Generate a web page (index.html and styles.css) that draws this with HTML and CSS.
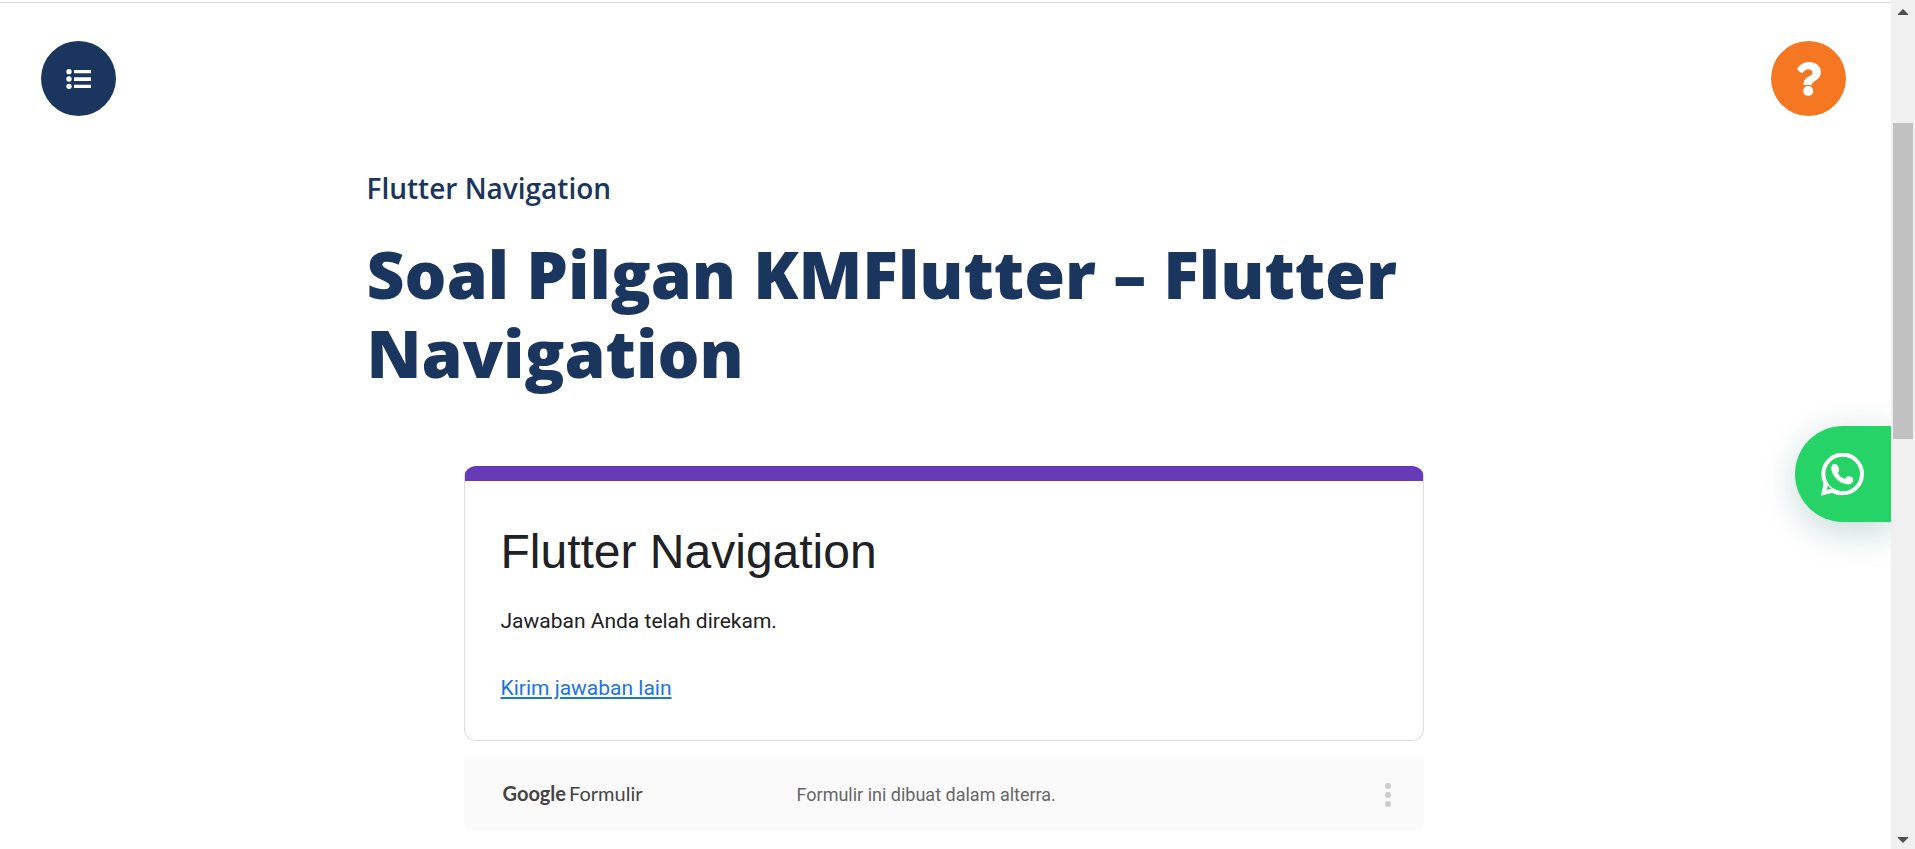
FILE: index.html
```html
<!DOCTYPE html>
<html lang="id">
<head>
<meta charset="utf-8">
<title>Soal Pilgan KMFlutter – Flutter Navigation</title>
<link rel="stylesheet" href="styles.css">
</head>
<body>
<div class="page">
  <header class="toolbar">
    <button class="round round-menu" type="button" aria-label="Daftar isi">
      <svg class="icon-list" viewBox="0 0 75 60" aria-hidden="true">
        <circle cx="9" cy="8" r="8"/><circle cx="9" cy="30" r="8"/><circle cx="9" cy="52" r="8"/>
        <path d="M24 3h51v10H24zM24 25h51v11H24zM24 47h51v10H24z"/>
      </svg>
    </button>
    <button class="round round-help" type="button" aria-label="Bantuan">
      <svg class="icon-help" viewBox="0 0 71 102" aria-hidden="true">
        <path d="M0 20C9 7 20 0 35 0c19 0 36 11 36 30 0 17-12 24-21 29-5 3-5 5-5 8q0 2-2 2H21q-2 0-2-2c0-13 8-19 17-24 7-4 10-6 10-11 0-6-6-10-13-10-7 0-11 4-16 10q-2 2-4 1L1 24q-2-2-1-4z"/>
        <circle cx="33" cy="87" r="15"/>
      </svg>
    </button>
  </header>

  <main class="lesson">
    <p class="topic">Flutter Navigation</p>
    <h1 class="title">Soal Pilgan KMFlutter – Flutter Navigation</h1>

    <section class="form">
      <div class="card">
        <h2 class="card-title">Flutter Navigation</h2>
        <p class="card-text">Jawaban Anda telah direkam.</p>
        <a class="card-link" href="#">Kirim jawaban lain</a>
      </div>
      <footer class="form-footer">
        <span class="brand"><span class="brand-name">Google</span><span>Formulir</span></span>
        <span class="origin">Formulir ini dibuat dalam alterra.</span>
        <button class="more" type="button" aria-label="Opsi lainnya">
          <svg viewBox="0 0 6 24" aria-hidden="true"><circle cx="3" cy="3" r="3"/><circle cx="3" cy="12" r="3"/><circle cx="3" cy="21" r="3"/></svg>
        </button>
      </footer>
    </section>
  </main>

  <a class="chat" href="#" aria-label="WhatsApp">
    <svg viewBox="260 158 129 129" aria-hidden="true">
      <circle class="chat-ring" cx="325" cy="221" r="58"/>
      <path class="chat-hole" d="M272 240l14 22 20 10-10 2-20 0-4-8z"/>
      <path d="M268 249l-8 37 35-9c7 4 13 6 20 7l2-12c-8-1-14-4-20-8l-20 5 5-19c-4-6-6-12-8-19l-12 2c1 6 3 11 6 16z"/>
      <path d="M296 192c5-2 11 0 14 4 3 5 5 10 4 15-1 3-3 5-3 8 3 8 11 14 20 16 4 0 5-6 10-7 6-1 11 2 14 5 3 4 2 9 0 12-4 6-11 8-17 7-14-2-26-9-35-20-7-8-11-17-12-26 0-6 1-11 5-14z"/>
    </svg>
  </a>
</div>

<div class="scroll" aria-hidden="true">
  <svg class="arrow" viewBox="0 0 10 6"><path d="M5 0l5 5v1H0V5z"/></svg>
  <div class="track"><div class="thumb"></div></div>
  <svg class="arrow" viewBox="0 0 10 6"><path d="M5 6l5-5V0H0v1z"/></svg>
</div>
</body>
</html>
```

FILE: styles.css
```css
* { box-sizing: border-box; }

body {
  margin: 0;
  height: 100vh;
  display: flex;
  overflow: hidden;
  background: #fff;
  font-family: Roboto, "Liberation Sans", sans-serif;
}

h1, h2, p { margin: 0; }

button {
  border: 0;
  padding: 0;
  background: none;
  cursor: pointer;
}

svg { display: block; }

.page {
  position: relative;
  flex: 1;
  min-width: 0;
  overflow: hidden;
  margin-top: 2px;
  border-top: 1px solid #ddd;
}

.toolbar {
  display: flex;
  justify-content: space-between;
  padding: 38px 45px 0 41px;
}

.round {
  width: 75px;
  height: 75px;
  border-radius: 50%;
  display: grid;
  place-items: center;
}

.round svg { fill: #fff; }
.round-menu { background: #1a355e; }
.round-help { background: #f57722; }
.icon-list { width: 25px; height: 20px; }
.icon-help { width: 24px; height: 34px; }

.lesson {
  max-width: 1158px;
  margin: 0 auto;
  padding-top: 52px;
  color: #1a355e;
}

.topic {
  font: 600 28px/40px "Open Sans", sans-serif;
}

.title {
  margin-top: 26px;
  font: 800 66px/79px "Open Sans", sans-serif;
}

.form {
  max-width: 960px;
  margin: 74px 0 0 97px;
}

.card {
  border: 1px solid #dadce0;
  border-top: 15px solid #673ab7;
  border-radius: 12px;
  padding: 41px 36px 36px;
  color: #202124;
}

.card-title {
  font: 400 48px/60px "Liberation Sans", Arial, sans-serif;
}

.card-text {
  margin: 23px 0 35px;
  font-size: 21px;
  line-height: 32px;
}

.card-link {
  font-size: 21px;
  line-height: 32px;
  color: #1a73e8;
}

.form-footer {
  display: grid;
  grid-template-columns: 294px 1fr auto;
  align-items: center;
  height: 72px;
  margin-top: 18px;
  padding: 0 33px 0 39px;
  border-radius: 0 0 10px 10px;
  background: #fafafa;
}

.brand {
  display: flex;
  gap: 3px;
  padding-bottom: 4px;
  font: 400 20px/28px Lato, sans-serif;
  color: #444;
}

.brand-name { font-weight: 700; }

.origin {
  font-size: 18px;
  line-height: 28px;
  color: #666;
}

.more svg {
  width: 6px;
  height: 24px;
  fill: #ccc;
}

.chat {
  position: absolute;
  right: 0;
  top: 50%;
  width: 96px;
  height: 96px;
  display: flex;
  align-items: center;
  padding-left: 26px;
  border-radius: 48px 0 0 48px;
  background: #25d366;
  box-shadow: 2px 9px 36px rgba(7, 94, 84, 0.24);
}

.chat svg {
  width: 43px;
  height: 43px;
  fill: #fff;
}

.chat .chat-ring {
  fill: none;
  stroke: #fff;
  stroke-width: 12;
}

.chat .chat-hole { fill: #25d366; }

.scroll {
  width: 24px;
  display: flex;
  flex-direction: column;
  align-items: center;
  padding: 9px 2px 6px;
  background: #f0f0f0;
}

.arrow {
  width: 10px;
  height: 6px;
  fill: #505050;
}

.track {
  flex: 1;
  align-self: stretch;
  padding-top: 108px;
}

.thumb {
  height: 316px;
  background: #c1c1c1;
}
```
